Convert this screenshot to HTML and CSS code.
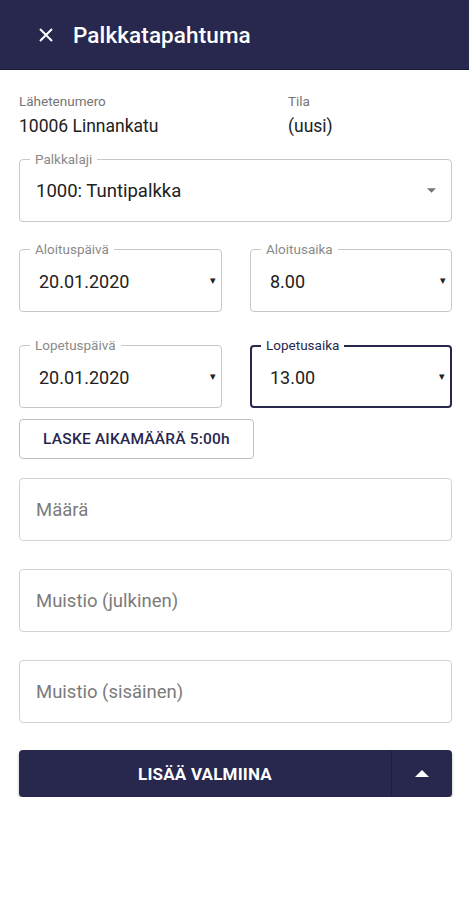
FILE: index.html
```html
<!DOCTYPE html>
<html lang="fi">
<head>
  <meta charset="UTF-8" />
  <meta name="viewport" content="width=device-width, initial-scale=1.0"/>
  <title>Palkkatapahtuma</title>
  <link rel="stylesheet" href="styles.css">
</head>
<body>
  <header class="topbar">
    <button class="close" aria-label="Sulje">
      <svg width="16" height="16" viewBox="0 0 16 16"><path d="M2 2L14 14M14 2L2 14" stroke="#fff" stroke-width="2" fill="none"/></svg>
    </button>
    <h1>Palkkatapahtuma</h1>
  </header>

  <main class="content">
    <div class="info">
      <div class="info-item">
        <span class="info-label">Lähetenumero</span>
        <span class="info-value">10006 Linnankatu</span>
      </div>
      <div class="info-item">
        <span class="info-label">Tila</span>
        <span class="info-value">(uusi)</span>
      </div>
    </div>

    <div class="field">
      <span class="field-label">Palkkalaji</span>
      <span class="field-value">1000: Tuntipalkka</span>
      <svg class="caret" width="9" height="5" viewBox="0 0 10 5"><path d="M0 0L10 0L5 5Z" fill="#757575"/></svg>
    </div>

    <div class="row">
      <div class="field">
        <span class="field-label">Aloituspäivä</span>
        <span class="field-value">20.01.2020</span>
        <span class="mini-caret">▾</span>
      </div>
      <div class="field">
        <span class="field-label">Aloitusaika</span>
        <span class="field-value">8.00</span>
        <span class="mini-caret">▾</span>
      </div>
    </div>

    <div class="row row-last">
      <div class="field">
        <span class="field-label">Lopetuspäivä</span>
        <span class="field-value">20.01.2020</span>
        <span class="mini-caret">▾</span>
      </div>
      <div class="field focused">
        <span class="field-label">Lopetusaika</span>
        <span class="field-value">13.00</span>
        <span class="mini-caret">▾</span>
      </div>
    </div>

    <button class="calc">LASKE AIKAMÄÄRÄ 5:00h</button>

    <div class="input">Määrä</div>
    <div class="input">Muistio (julkinen)</div>
    <div class="input">Muistio (sisäinen)</div>

    <div class="split">
      <button class="split-main">LISÄÄ VALMIINA</button>
      <button class="split-toggle" aria-label="Lisää vaihtoehtoja">
        <svg width="14" height="7" viewBox="0 0 14 7"><path d="M0 7L7 0L14 7Z" fill="#fff"/></svg>
      </button>
    </div>
  </main>
</body>
</html>
```

FILE: styles.css
```css
* {
  box-sizing: border-box;
}
body {
  margin: 0;
  background: #fff;
  font-family: Roboto, "Noto Sans", sans-serif;
  color: #212121;
}
.topbar {
  background: #28284f;
  height: 70px;
  display: flex;
  align-items: center;
  padding: 0 0 0 38px;
  gap: 19px;
  border-bottom: 1px solid #1a1a38;
}
.close {
  background: none;
  border: none;
  padding: 0;
  width: 16px;
  height: 16px;
  display: flex;
  margin-top: 1px;
}
.topbar h1 {
  margin: 0;
  color: #fff;
  font-size: 22.5px;
  font-weight: 500;
  letter-spacing: 0.1px;
}
.content {
  padding: 23px 17px 0 19px;
  display: flex;
  flex-direction: column;
}
.info {
  display: grid;
  grid-template-columns: 269px 1fr;
  margin-bottom: 22px;
}
.info-item {
  display: flex;
  flex-direction: column;
}
.info-label {
  font-size: 13.5px;
  color: #757575;
  line-height: 16px;
}
.info-value {
  font-size: 17.5px;
  line-height: 22px;
  margin-top: 6px;
  color: #212121;
}
.field {
  position: relative;
  border: 1px solid #c8c8c8;
  border-radius: 4px;
  height: 63px;
  display: flex;
  align-items: center;
  padding: 0 15px 0 16px;
}
.field-label {
  position: absolute;
  top: -9px;
  left: 10px;
  padding: 0 5px;
  background: #fff;
  font-size: 13.5px;
  line-height: 16px;
  color: #8a8a8a;
}
.field-value {
  font-size: 18.5px;
  flex: 1;
  padding-top: 1px;
}
.mini-caret {
  font-size: 11px;
  color: #222;
  margin-right: -10px;
}
.row {
  display: grid;
  grid-template-columns: 203px 202px;
  justify-content: space-between;
  margin-top: 27px;
}
.row .field {
  padding-left: 19px;
}
.row .field-value {
  font-size: 18px;
}
.row-last {
  margin-top: 33px;
}
.field.focused {
  border: 2px solid #28284f;
  padding-left: 18px;
}
.field.focused .field-label {
  color: #28284f;
  top: -10px;
  left: 9px;
}
.calc {
  margin-top: 11px;
  width: 235px;
  height: 40px;
  background: #fff;
  border: 1px solid #c0c0c0;
  border-radius: 4px;
  font-family: inherit;
  font-size: 15.5px;
  font-weight: 500;
  color: #28284f;
  letter-spacing: 0.2px;
  cursor: pointer;
}
.input {
  margin-top: 19px;
  height: 63px;
  border: 1px solid #d3d3d3;
  border-radius: 4px;
  display: flex;
  align-items: center;
  padding: 0 16px;
  font-size: 18.5px;
  color: #7b7b7b;
}
.input + .input {
  margin-top: 28px;
}
.split {
  margin-top: 27px;
  height: 47px;
  display: flex;
  background: #28284f;
  border-radius: 4px;
  box-shadow: 0 2px 3px rgba(0, 0, 0, 0.3);
  overflow: hidden;
}
.split-main {
  flex: 1;
  background: none;
  border: none;
  border-right: 1px solid #1f1f40;
  color: #fff;
  font-family: inherit;
  font-size: 17px;
  font-weight: 700;
  letter-spacing: 0.2px;
  cursor: pointer;
}
.split-toggle {
  width: 60px;
  background: none;
  border: none;
  display: flex;
  align-items: center;
  justify-content: center;
  cursor: pointer;
}
```
